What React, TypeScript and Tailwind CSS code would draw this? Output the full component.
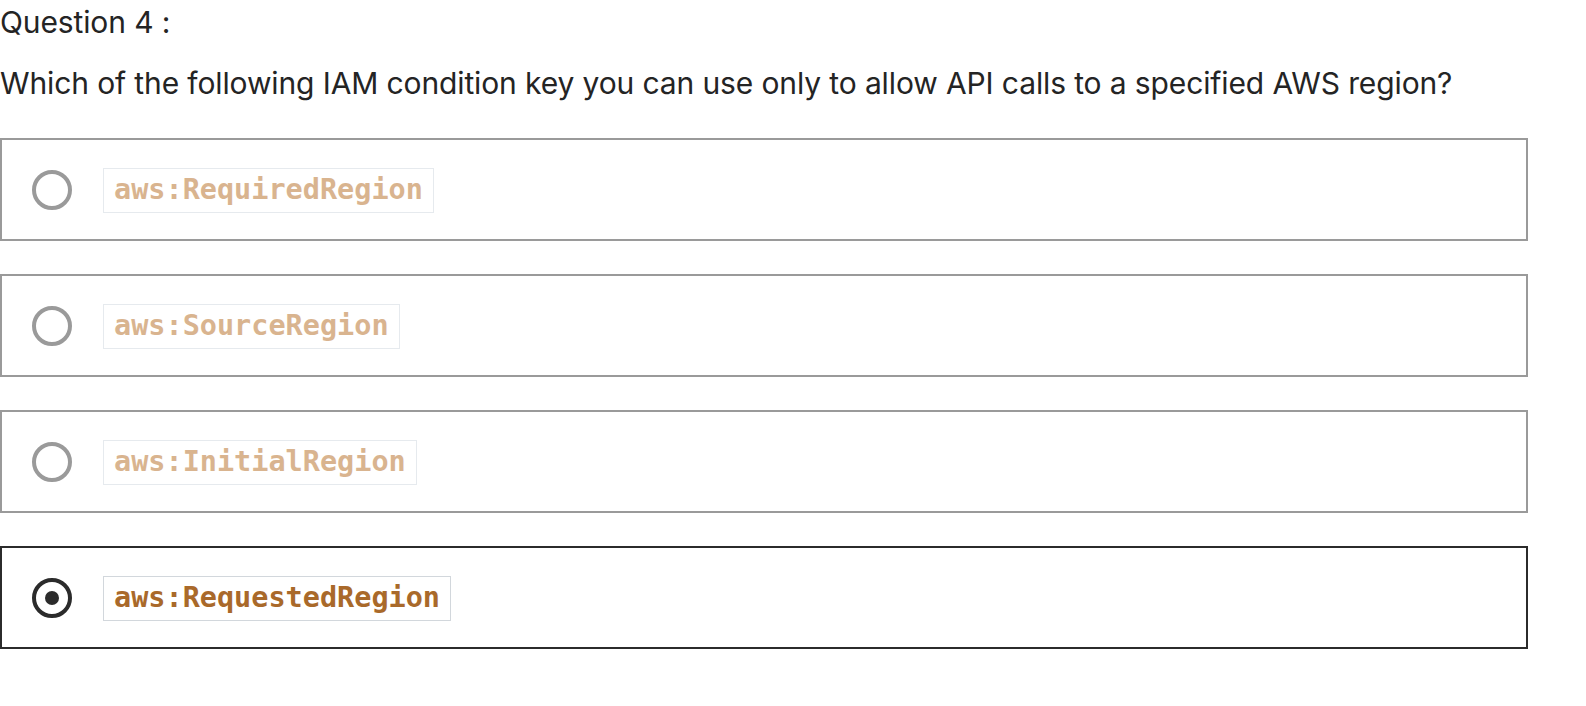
import { useState } from 'react'

const options = [
    'aws:RequiredRegion',
    'aws:SourceRegion',
    'aws:InitialRegion',
    'aws:RequestedRegion',
]

export default function App() {
    const [picked, setPicked] = useState(3)

    return (
        <div className="min-h-screen bg-white text-[#242424] font-['Inter','Liberation_Sans',sans-serif]">
            <p className="text-[30px] leading-[36px] pt-[4px] tracking-[-0.004em]">Question 4 :</p>
            <p className="text-[30px] leading-[36px] mt-[25px] tracking-[-0.004em]">
                Which of the following IAM condition key you can use only to allow API calls to a specified AWS region?
            </p>

            <div className="mt-[37px] w-[1528px] flex flex-col gap-[33px]">
                {options.map((opt, i) => {
                    const on = picked === i
                    return (
                        <label
                            key={opt}
                            onClick={() => setPicked(i)}
                            className={`h-[103px] flex items-center pl-[30px] gap-[31px] border-2 cursor-pointer ${on ? 'border-[#2b2b2b]' : 'border-[#9a9a9a]'}`}
                        >
                            {/* radio */}
                            <span
                                className={`w-[40px] h-[40px] rounded-full border-[4px] flex items-center justify-center shrink-0 ${on ? 'border-[#2b2b2b]' : 'border-[#9a9a9a]'}`}
                            >
                                {on && <span className="w-[14px] h-[14px] rounded-full bg-[#2b2b2b]" />}
                            </span>

                            <code
                                className={`h-[45px] mt-[2px] flex items-center px-[10px] border text-[28.5px] font-bold font-['DejaVu_Sans_Mono',monospace] ${on ? 'border-[#d2d7dc] text-[#a9692a]' : 'border-[#e6eaee] text-[#d9b48f]'}`}
                            >
                                {opt}
                            </code>
                        </label>
                    )
                })}
            </div>
        </div>
    )
}
